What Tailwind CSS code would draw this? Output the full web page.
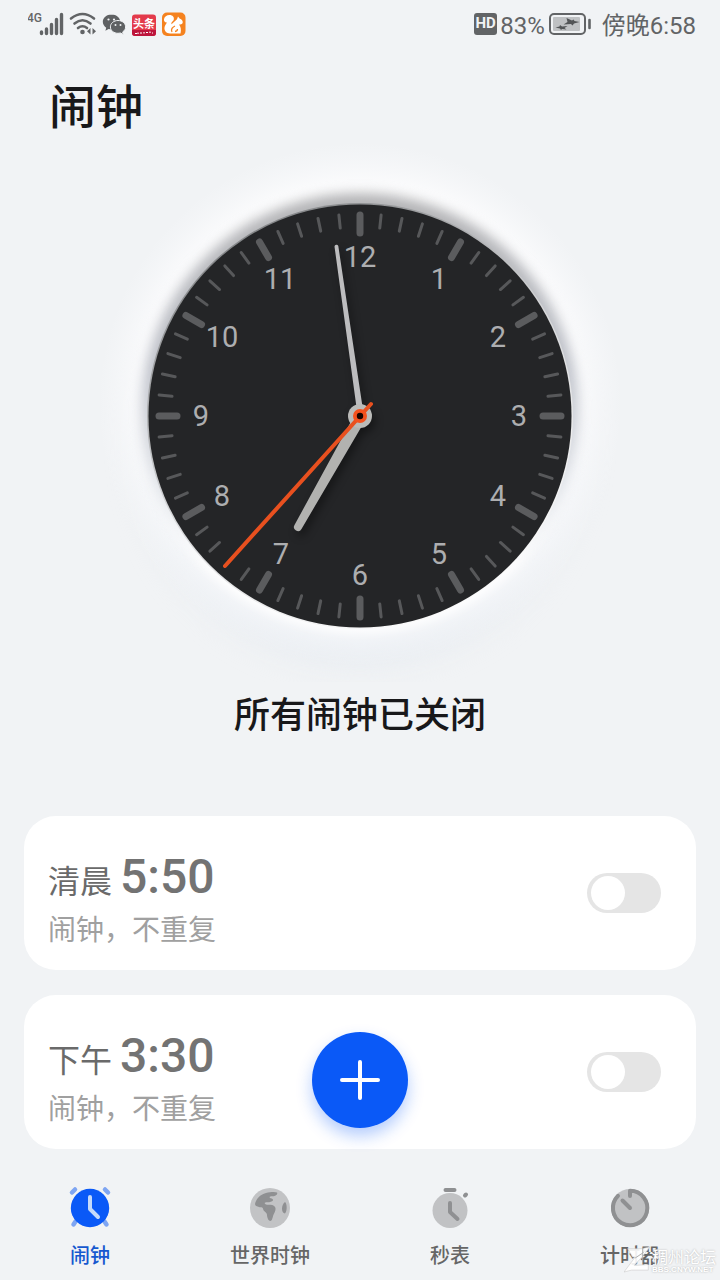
<!DOCTYPE html>
<html lang="zh-CN">
<head>
<meta charset="utf-8">
<meta name="viewport" content="width=device-width, initial-scale=1">
<title>闹钟</title>
<script src="https://cdn.jsdelivr.net/npm/@tailwindcss/browser@4"></script>
</head>
<body class="bg-[#f1f3f5] font-['Roboto','Noto_Sans_CJK_SC',sans-serif] text-[#18181a]">
<div class="relative flex min-h-screen flex-col overflow-hidden">

  <!-- Status bar -->
  <header class="flex h-12 items-center justify-between pr-6 pl-7 text-2xl text-[#626466]">
    <svg class="h-12 w-40" viewBox="28 0 160 48" role="img" aria-label="4G 信号、无线网络、通知">
      <text x="27" y="22" font-size="12" font-weight="500" fill="#666" font-family="Roboto">4G</text>
      <g stroke="#626466" stroke-width="3.400" stroke-linecap="round">
        <path d="M41.500 32v1.500M46.500 29v4.500M51.500 24.500v9M56.500 19.500v14M61.500 14.500v19"/>
      </g>
      <g fill="none" stroke="#626466" stroke-width="2.600" stroke-linecap="round">
        <path d="M71 18.500Q82.500 9.500 94 18.500M74.500 23.500Q82.500 17 90.500 23.500M78 28Q82.500 24.500 87 28"/>
      </g>
      <circle cx="82.500" cy="32" r="2.300" fill="#626466"/>
      <path d="M90.500 28v6.500l-3.500-3.200zM92.500 28v6.500l3.500-3.200z" fill="#626466"/>
      <g fill="#5f6163">
        <path d="M111.500 14.500c-5 0-8.700 3.400-8.700 7.300 0 2.500 1.300 4.500 3.400 5.900l-.8 3 3.200-1.700c1 .3 2 .4 3 .4 5 0 8.700-3.300 8.700-7.500s-3.800-7.400-8.800-7.400z"/>
        <path stroke="#f1f3f5" stroke-width="1" d="M118 20.500c-4.300 0-7.600 2.900-7.600 6.400s3.300 6.400 7.600 6.400c.9 0 1.700-.1 2.500-.3l2.900 1.500-.7-2.600c1.900-1.200 2.900-3 2.900-5 0-3.500-3.300-6.400-7.600-6.400z"/>
      </g>
      <g fill="#f1f3f5"><circle cx="108.500" cy="19.500" r="1.100"/><circle cx="114" cy="19.500" r="1.100"/><circle cx="115.500" cy="25" r="1"/><circle cx="120.500" cy="25" r="1"/></g>
      <rect x="132" y="14.500" width="24" height="21.500" rx="3" fill="#e33a4b"/>
      <path d="M132 30h24v3a3 3 0 0 1-3 3h-18a3 3 0 0 1-3-3z" fill="#bd153c"/>
      <text x="144" y="27.500" font-size="11" font-weight="700" fill="#fff" text-anchor="middle" font-family="Noto Sans CJK SC">头条</text>
      <path d="M135 33.500h2m1-1v1.500m2-1h2m2-1v1.500m2-1h2m2-1v1.500m2 0h1" stroke="#fff" stroke-width="1.200" fill="none"/>
      <rect x="162" y="12.500" width="23.500" height="23.500" rx="5" fill="#f5821f"/>
      <path fill="#fff" d="M169.500 15c3.300 0 4.800 2.200 4.300 4.500-.4 2-3 2.700-2.300 4.700l5.500-5 1-2.700 1.600 2c2.200 1 3.500 2.500 3.100 4.200-.4 1.500-2.400 1.700-3.700 1.700 1.700 2 2.500 5.300 1.500 9h-10.500c-3.500-.2-6-2.700-5.500-6 .3-2.200 1.700-3.700 2.500-5-2 .3-3.300-1.200-3-3.200.3-2.400 2.700-4.200 5.500-4.200z"/>
      <path d="M172 32c-1.500-2.500.5-5 3-6M175 31.500c1.500-.2 2.500-1 2.500-2.500" fill="none" stroke="#f5821f" stroke-width="1.300"/>
    </svg>
    <div class="flex items-center">
      <span class="mr-[3px] flex h-[22px] w-[23px] items-center justify-center rounded-[3px] bg-[#626466] text-[15px] font-bold text-[#f1f3f5]">HD</span>
      <span class="pt-1">83%</span>
      <svg class="mr-2.5 ml-1 h-6 w-[43px]" viewBox="0 0 43 24" role="img" aria-label="正在充电">
        <rect x="1" y="2" width="35" height="20" rx="4" fill="none" stroke="#626466" stroke-width="2"/>
        <rect x="4" y="5" width="27" height="14" rx="1" fill="#bfc1c3"/>
        <path d="M17.500 6l5.500 2.500 1.500-1 1 1.500 5 1-5.500 1.500-1.500 2-1.500-1.500-7.500.5 4-2.500zM6.500 15.500l4-1 .5-1.500 2 1.500 5.500-.5-3 2 2 1.500-4.500-.5-1 1-1-1.500z" fill="#525456"/>
        <path d="M40.500 8v8" stroke="#626466" stroke-width="2.600" stroke-linecap="round"/>
      </svg>
      <span class="pt-1">傍晚6:58</span>
    </div>
  </header>

  <main class="flex flex-col">
    <h1 class="px-[49px] pt-[26px] text-[47px] leading-[68px] font-medium">闹钟</h1>

    <!-- Analogue clock -->
    <svg class="mx-auto h-[540px] w-[560px]" viewBox="-280 -274 560 540" role="img" aria-label="6:58">
      <defs>
        <radialGradient id="glow">
          <stop offset="0.780" stop-color="#fff"/>
          <stop offset="0.860" stop-color="#fdfdfe" stop-opacity="0.700"/>
          <stop offset="1" stop-color="#f8f9fb" stop-opacity="0"/>
        </radialGradient>
        <linearGradient id="shade" x1="0" y1="0" x2="0" y2="1">
          <stop offset="0" stop-color="#b4b4b6"/>
          <stop offset="0.400" stop-color="#c0c3cb"/>
          <stop offset="0.680" stop-color="#e2e5ea"/>
          <stop offset="0.850" stop-color="#ffffff"/>
        </linearGradient>
        <linearGradient id="rim" x1="0.200" y1="0" x2="0.750" y2="1">
          <stop offset="0" stop-color="#77797b"/>
          <stop offset="0.500" stop-color="#d6d7d9"/>
          <stop offset="1" stop-color="#ffffff"/>
        </linearGradient>
        <filter id="soft" x="-20%" y="-20%" width="140%" height="140%" color-interpolation-filters="sRGB"><feGaussianBlur stdDeviation="6"/></filter>
        <filter id="wide" x="-20%" y="-20%" width="140%" height="140%" color-interpolation-filters="sRGB"><feGaussianBlur stdDeviation="16"/></filter>
        <filter id="hand" x="-50%" y="-50%" width="200%" height="200%" color-interpolation-filters="sRGB"><feDropShadow dx="3" dy="5" stdDeviation="4" flood-color="#000" flood-opacity="0.400"/></filter>
      </defs>
      <circle cy="26" r="218" fill="#e5eaf0" filter="url(#wide)"/>
      <circle cy="-12" r="262" fill="url(#glow)"/>
      <circle cy="-4" r="219" fill="url(#shade)" filter="url(#soft)"/>
      <circle r="213" fill="url(#rim)"/>
      <circle r="211.500" fill="#242527"/>
      <g id="ticks" stroke-linecap="round"></g>
      <g id="numerals" fill="#adaeb0" font-family="Roboto" font-size="29" text-anchor="middle"></g>
      <g filter="url(#hand)">
        <path d="M-25.500-169.500a2 2 0 0 1 3.800-.6L3-6-3-5z" fill="#bdbdbf"/>
        <path d="M-6 0L-65.500 109a4 4 0 0 0 7 4L6 3z" fill="#b2b2b0"/>
        <circle r="12" fill="#bbbbb9"/>
      </g>
      <path d="M-135 150L11-12" stroke="#e8501f" stroke-width="4" stroke-linecap="round"/>
      <circle r="7" fill="#f4511e"/>
      <circle r="3.200" fill="#180400"/>
    </svg>

    <h2 class="mt-2 text-center text-[36px] leading-[52px] font-medium">所有闹钟已关闭</h2>

    <!-- Alarms -->
    <ul class="mt-[74px] flex flex-col gap-[25px] px-6">
      <li class="flex h-[154px] items-center justify-between rounded-[32px] bg-white pr-[35px] pl-6">
        <label for="alarm-1" class="flex flex-col pt-3.5">
          <span class="flex items-baseline gap-2 text-[32px] leading-[56px] text-[#6a6a6a]">清晨<span class="text-[48px] font-medium text-[#737373]">5:50</span></span>
          <span class="text-[28px] leading-[42px] text-[#a0a0a0]">闹钟，不重复</span>
        </label>
        <input id="alarm-1" type="checkbox" role="switch" class="h-10 w-[74px] appearance-none rounded-full bg-[#e5e5e5] p-[3px] pl-1 before:block before:size-[34px] before:rounded-full before:bg-white checked:bg-[#0a59f7] checked:before:ml-8">
      </li>
      <li class="flex h-[154px] items-center justify-between rounded-[32px] bg-white pr-[35px] pl-6">
        <label for="alarm-2" class="flex flex-col pt-3.5">
          <span class="flex items-baseline gap-2 text-[32px] leading-[56px] text-[#6a6a6a]">下午<span class="text-[48px] font-medium text-[#737373]">3:30</span></span>
          <span class="text-[28px] leading-[42px] text-[#a0a0a0]">闹钟，不重复</span>
        </label>
        <input id="alarm-2" type="checkbox" role="switch" class="h-10 w-[74px] appearance-none rounded-full bg-[#e5e5e5] p-[3px] pl-1 before:block before:size-[34px] before:rounded-full before:bg-white checked:bg-[#0a59f7] checked:before:ml-8">
      </li>
    </ul>
  </main>

  <!-- Tab bar -->
  <div class="relative mt-auto h-[131px]">
    <button type="button" aria-label="添加闹钟" class="absolute bottom-[152px] left-1/2 flex size-24 -translate-x-1/2 items-center justify-center rounded-full bg-[#0a59f7] shadow-[0_8px_16px_rgba(10,89,247,0.3)]">
      <svg class="size-12" viewBox="0 0 48 48" aria-hidden="true"><path d="M6 24h36M24 6v36" stroke="#fff" stroke-width="4" stroke-linecap="round"/></svg>
    </button>
    <nav class="grid grid-cols-4 pt-[35px] text-xl leading-7 font-medium text-[#666]">
      <a href="#alarm" aria-current="page" class="flex flex-col items-center gap-2.5 text-[#1658cf]">
        <svg class="size-12" viewBox="-24 -24 48 48" aria-hidden="true">
          <path d="M-18-15.500l3-3M18-15.500l-3-3M-16.500 16.500l2-3M16.500 16.500l-2-3" stroke="#7ea5f2" stroke-width="4.500" stroke-linecap="round"/>
          <circle r="19.200" fill="#0a59f7"/>
          <path d="M0-11V1l8 8" fill="none" stroke="#c5dafa" stroke-width="4" stroke-linecap="round" stroke-linejoin="round"/>
        </svg>闹钟</a>
      <a href="#world" class="flex flex-col items-center gap-2.5">
        <svg class="size-12" viewBox="-24 -24 48 48" aria-hidden="true">
          <circle r="20" fill="#c2c3c5"/>
          <path fill="#8f9092" d="M-15-4c1-5 5-9.500 11-11C0-16 5-16.500 7-15.500 8-14 6-12.500 4.500-12c-2 .5-4-.5-5 1 0 1.500 2 1 3 2C4-7.500 2-6.500 0-6c-2 .5-4.500-.5-5.500 1C-5-3.500-3-3 0-3.200 3-3.300 5-2 5.500 0c.5 3-1.500 5-2.300 7.500C2.500 10 2 13 .3 13c-2 0-3.300-4-3.300-6C-3 4-6.500 4-7 .8-7.500-1.500-9 0-11-1c-2-.5-4-1-4-3zM15-6c2 1.500 2.500 8.500 0 11.500C11 5 11-3 15-6z"/>
        </svg>世界时钟</a>
      <a href="#stopwatch" class="flex flex-col items-center gap-2.5">
        <svg class="size-12" viewBox="-24 -24 48 48" aria-hidden="true">
          <circle cy="2.500" r="17.500" fill="#c1c2c4"/>
          <path d="M-4.500-18h9M15-12.500l1-1" stroke="#8f9092" stroke-width="4" stroke-linecap="round"/>
          <path d="M0-5V4l7.500 7" fill="none" stroke="#8f9092" stroke-width="4" stroke-linecap="round" stroke-linejoin="round"/>
        </svg>秒表</a>
      <a href="#timer" class="flex flex-col items-center gap-2.5">
        <svg class="size-12" viewBox="-24 -24 48 48" aria-hidden="true">
          <circle r="19" fill="#c1c2c4"/>
          <path d="M0-12v-5.200A17.200 17.200 0 1 1-12-12.200" fill="none" stroke="#8f9092" stroke-width="4" stroke-linecap="round" stroke-linejoin="round"/>
          <path d="M-7.500-7.500L0 0" stroke="#8f9092" stroke-width="4" stroke-linecap="round"/>
        </svg>计时器</a>
    </nav>
    <div class="pointer-events-none absolute right-1 bottom-1.5 flex items-end text-white [text-shadow:0_0_2px_#aaa]">
      <svg class="h-8 w-7" viewBox="0 0 30 32" aria-hidden="true">
        <path d="M4 6h15l9-2-8 10-9 10 15-1v6H8l-8 2 12-16H9z" fill="#fff" fill-opacity="0.900" stroke="#c8c8c8" stroke-width="0.600"/>
        <path d="M20 5v16m-8-5l9-6" stroke="#aaa" stroke-width="1" fill="none"/>
      </svg>
      <span class="flex flex-col"><span class="text-[16px] leading-4">稠州论坛</span><span class="font-['Liberation_Sans'] text-[8px] leading-2 font-bold">BBS.CNYW.NET</span></span>
    </div>
  </div>
</div>

<script>
  const NS = 'http://www.w3.org/2000/svg';
  const ticks = document.getElementById('ticks');
  const numerals = document.getElementById('numerals');
  for (let i = 0; i < 60; i++) {
    const major = i % 5 === 0;
    const line = document.createElementNS(NS, 'line');
    line.setAttribute('y1', major ? -201 : -202);
    line.setAttribute('y2', major ? -183 : -189);
    line.setAttribute('stroke', major ? '#5b5c5e' : '#57585a');
    line.setAttribute('stroke-width', major ? 7 : 3);
    line.setAttribute('transform', `rotate(${i * 6})`);
    ticks.appendChild(line);
  }
  for (let h = 1; h <= 12; h++) {
    const a = h * Math.PI / 6;
    const t = document.createElementNS(NS, 'text');
    t.setAttribute('x', Math.round(159 * Math.sin(a)));
    t.setAttribute('y', Math.round(10.4 - 159 * Math.cos(a)));
    t.textContent = h;
    numerals.appendChild(t);
  }
</script>
</body>
</html>
